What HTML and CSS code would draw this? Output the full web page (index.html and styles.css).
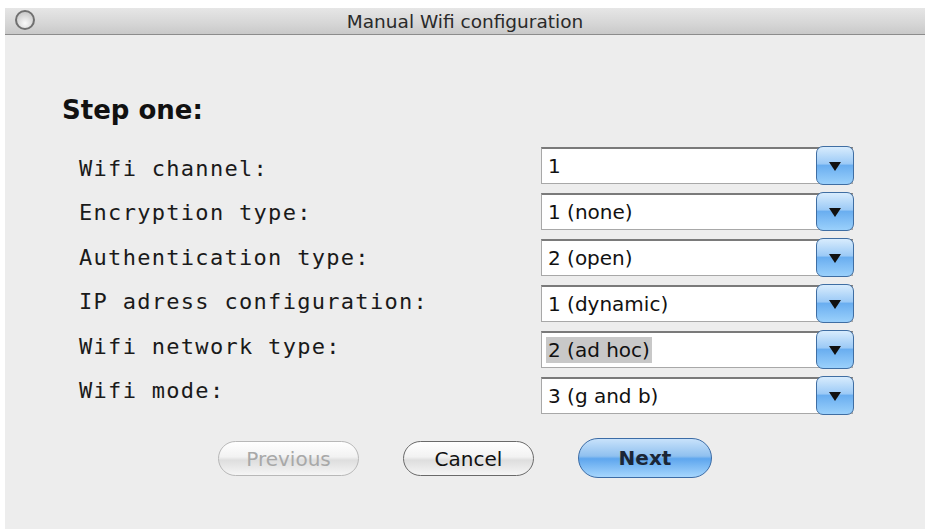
FILE: index.html
```html
<!DOCTYPE html>
<html>
<head>
    <title>Manual Wifi configuration</title>
    <link rel="stylesheet" href="styles.css">
</head>
<body>
    <div class="window">
        <div class="titlebar">
            <span class="close-btn"></span>
            <span class="title">Manual Wifi configuration</span>
        </div>
        <div class="content">
            <h2 class="step">Step one:</h2>
            <div class="form">
                <div class="labels">
                    <label>Wifi channel:</label>
                    <label>Encryption type:</label>
                    <label>Authentication type:</label>
                    <label>IP adress configuration:</label>
                    <label>Wifi network type:</label>
                    <label>Wifi mode:</label>
                </div>
                <div class="fields">
                    <div class="combo"><span class="value">1</span><span class="arrow"></span></div>
                    <div class="combo"><span class="value">1 (none)</span><span class="arrow"></span></div>
                    <div class="combo"><span class="value">2 (open)</span><span class="arrow"></span></div>
                    <div class="combo"><span class="value">1 (dynamic)</span><span class="arrow"></span></div>
                    <div class="combo"><span class="value selected">2 (ad hoc)</span><span class="arrow"></span></div>
                    <div class="combo"><span class="value">3 (g and b)</span><span class="arrow"></span></div>
                </div>
            </div>
            <div class="buttons">
                <button class="btn disabled">Previous</button>
                <button class="btn">Cancel</button>
                <button class="btn default">Next</button>
            </div>
        </div>
    </div>
</body>
</html>
```

FILE: styles.css
```css
body {
    margin: 0;
    background: #fff;
    font-family: 'DejaVu Sans', 'Open Sans', sans-serif;
}
.window {
    margin: 8px 4px 0 5px;
    height: 521px;
    background: #ededed;
    display: flex;
    flex-direction: column;
}
.titlebar {
    height: 26px;
    border-bottom: 1px solid #8c8c8c;
    background: linear-gradient(#e6e6e6, #d6d6d6 60%, #c9c9c9);
    display: flex;
    align-items: center;
    justify-content: center;
    position: relative;
}
.close-btn {
    position: absolute;
    left: 10px;
    top: 2px;
    width: 16px;
    height: 16px;
    border-radius: 50%;
    border: 2px solid #707070;
    background: radial-gradient(circle at 50% 70%, #fafafa, #cfcfcf 70%);
}
.title {
    font-size: 18.5px;
    color: #2a2a2a;
}
.content {
    padding: 0 0 0 57px;
}
.step {
    margin: 53px 0 15px 0;
    font-size: 26px;
    font-weight: bold;
    color: #111;
    height: 44px;
    line-height: 44px;
}
.form {
    display: flex;
    margin-left: 17px;
}
.labels {
    width: 462px;
    display: flex;
    flex-direction: column;
    gap: 7.4px;
    padding-top: 3px;
}
.labels label {
    height: 37px;
    font-family: 'DejaVu Sans Mono', 'Liberation Mono', monospace;
    font-size: 22px;
    letter-spacing: 1.3px;
    color: #1a1a1a;
    display: flex;
    align-items: center;
}
.fields {
    width: 312px;
    display: flex;
    flex-direction: column;
    gap: 9px;
}
.combo {
    height: 37px;
    display: flex;
    align-items: stretch;
    background: #fff;
    border: 1px solid #a8a8a8;
    border-top: 2px solid #7a7a7a;
    box-sizing: border-box;
}
.value {
    flex: 1;
    display: flex;
    align-items: center;
    padding-left: 6px;
    font-size: 20px;
    color: #111;
}
.value.selected {
    flex: none;
    background: #c8c8c8;
    margin: 4px 0 4px 4px;
    padding: 0 2px;
}
.combo .selected + .arrow {
    margin-left: auto;
}
.arrow {
    width: 38px;
    margin: -3px -2px -2px 0;
    border: 1px solid #3f6ea3;
    border-radius: 7px;
    background: linear-gradient(#d8ecfd, #9ccaf6 45%, #6aaef0 50%, #9ad0fb 100%);
    box-sizing: border-box;
    position: relative;
}
.arrow::after {
    content: "";
    position: absolute;
    left: 12px;
    top: 15px;
    border-left: 6px solid transparent;
    border-right: 6px solid transparent;
    border-top: 9px solid #111;
}
.buttons {
    display: flex;
    align-items: flex-start;
    gap: 44px;
    margin: 27px 0 0 156px;
}
.btn {
    height: 35px;
    border-radius: 18px;
    border: 1px solid #6a6a6a;
    background: linear-gradient(#ffffff, #f2f2f2 45%, #dedede 55%, #f5f5f5);
    font-family: 'DejaVu Sans', sans-serif;
    font-size: 20px;
    color: #111;
    padding: 0;
    width: 131px;
}
.btn.disabled {
    width: 141px;
    color: #a8a8a8;
    border-color: #b8b8b8;
}
.btn.default {
    width: 134px;
    height: 40px;
    margin-top: -3px;
    border-radius: 20px;
    border-color: #3c6ca6;
    background: linear-gradient(#c8e2fb, #8fc0ef 45%, #5ea6ee 52%, #a6d6fd 100%);
    font-weight: bold;
    color: #1b2636;
}
```
